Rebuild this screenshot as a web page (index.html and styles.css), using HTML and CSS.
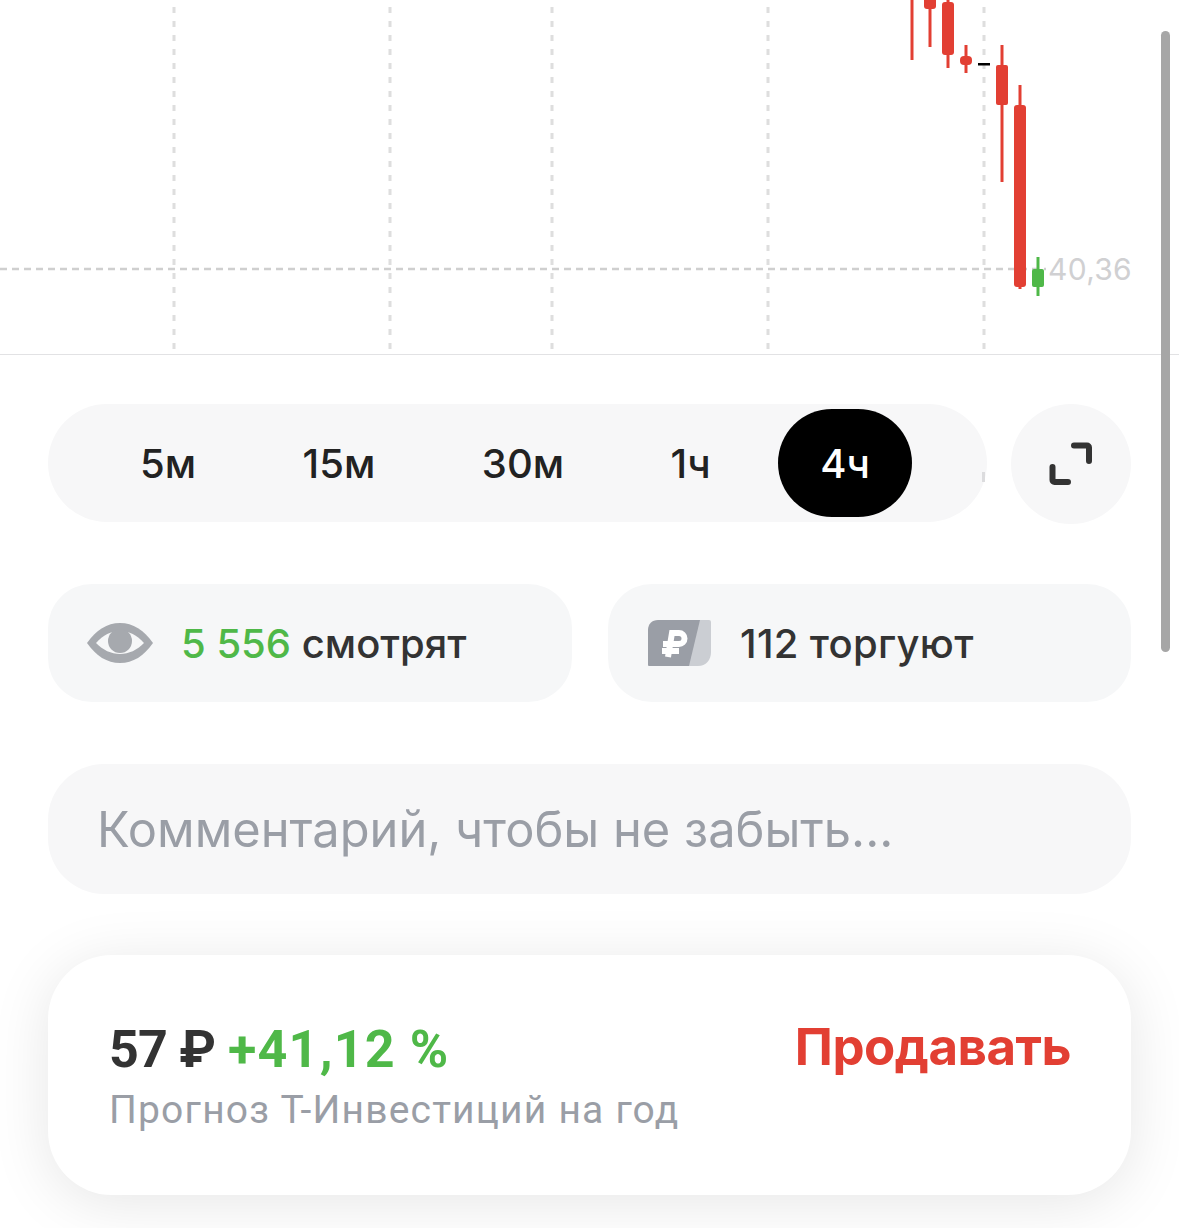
FILE: index.html
```html
<!DOCTYPE html>
<html lang="ru">
<head>
    <meta charset="UTF-8">
    <meta name="viewport" content="width=device-width, initial-scale=1.0">
    <title>Т-Инвестиции</title>
    <link rel="stylesheet" href="styles.css">
</head>
<body>
    <div class="chart">
        <svg class="chart-svg" width="1179" height="354" viewBox="0 0 1179 354">
            <g class="grid">
                <line x1="174" y1="-7" x2="174" y2="349"/>
                <line x1="390" y1="-7" x2="390" y2="349"/>
                <line x1="552" y1="-7" x2="552" y2="349"/>
                <line x1="768" y1="-7" x2="768" y2="349"/>
                <line x1="984" y1="-7" x2="984" y2="349"/>
            </g>
            <line class="price-line" x1="0" y1="269" x2="1046" y2="269"/>
            <g class="wick-red">
                <line x1="912" y1="0" x2="912" y2="60"/>
                <line x1="930" y1="0" x2="930" y2="47"/>
                <line x1="948" y1="0" x2="948" y2="68"/>
                <line x1="966" y1="45" x2="966" y2="73"/>
                <line x1="1002" y1="45" x2="1002" y2="182"/>
                <line x1="1020" y1="85" x2="1020" y2="289"/>
            </g>
            <g class="body-red">
                <rect x="924" y="-4" width="12" height="13" rx="3"/>
                <rect x="942" y="2" width="12" height="53" rx="3"/>
                <rect x="960" y="56" width="12" height="9" rx="4"/>
                <rect x="996" y="65" width="12" height="40" rx="2"/>
                <rect x="1014" y="105" width="12" height="182" rx="3"/>
            </g>
            <rect class="doji" x="978" y="63" width="12" height="2.500"/>
            <line class="wick-green" x1="1038" y1="257" x2="1038" y2="296"/>
            <rect class="body-green" x="1032" y="269" width="12" height="18" rx="2"/>
        </svg>
        <span class="last-price">40,36</span>
    </div>

    <main class="content">
        <div class="period-row">
            <div class="periods">
                <span class="period">5м</span>
                <span class="period">15м</span>
                <span class="period">30м</span>
                <span class="period">1ч</span>
                <span class="period active">4ч</span>
                <span class="period-peek"></span>
            </div>
            <button class="expand" type="button" aria-label="На весь экран">
                <svg width="44" height="44" viewBox="0 0 44 44">
                    <path d="M25 3.500h13a2 2 0 0 1 2 2V19"/>
                    <path d="M3.500 25v13a2 2 0 0 0 2 2H19"/>
                </svg>
            </button>
        </div>

        <div class="stats">
            <div class="stat">
                <svg class="eye" width="66" height="40" viewBox="0 0 66 40">
                    <path class="eye-outer" d="M0 20C9 7 20 0 33 0s24 7 33 20c-9 13-20 20-33 20S9 33 0 20z"/>
                    <path class="eye-inner" d="M9 20c7-8 15-12 24-12s17 4 24 12c-7 7-15 11-24 11S16 27 9 20z"/>
                    <circle class="eye-outer" cx="33" cy="18" r="12"/>
                </svg>
                <span><span class="green">5 556</span> смотрят</span>
            </div>
            <div class="stat stat-trade">
                <svg class="ruble" width="64" height="46" viewBox="0 0 64 46">
                    <path class="ruble-light" d="M50 0h11a2 2 0 0 1 2 2v30c0 8-5 14-13 14H39z"/>
                    <path class="ruble-dark" d="M10 0h42L41 46H1a1 1 0 0 1-1-1V10C0 4 4 0 10 0z"/>
                    <g class="ruble-sign">
                        <path d="M20 37L24 13h7a5.500 5.500 0 0 1 0 11H15"/>
                        <path d="M14 31h17"/>
                    </g>
                </svg>
                <span>112 торгуют</span>
            </div>
        </div>

        <div class="comment">Комментарий, чтобы не забыть...</div>

        <section class="forecast">
            <div class="forecast-info">
                <div class="forecast-price"><span class="forecast-value">57 ₽</span> <span class="green forecast-growth">+41,12 %</span></div>
                <div class="forecast-label">Прогноз Т-Инвестиций на год</div>
            </div>
            <div class="forecast-action">Продавать</div>
        </section>
    </main>

    <div class="scrollbar"></div>
</body>
</html>
```

FILE: styles.css
```css
* {
    box-sizing: border-box;
}

body {
    margin: 0;
    height: 1228px;
    overflow: hidden;
    position: relative;
    background: #fff;
    font-family: 'Inter', 'Liberation Sans', sans-serif;
    color: #333;
}

.chart {
    position: relative;
    height: 355px;
    border-bottom: 1px solid #e2e2e4;
}

.chart-svg {
    display: block;
}

.grid line {
    stroke: #dedede;
    stroke-width: 3;
    stroke-dasharray: 6 8;
}

.price-line {
    stroke: #cfcfcf;
    stroke-width: 2.500;
    stroke-dasharray: 7 5;
}

.wick-red line {
    stroke: #e23f33;
    stroke-width: 3;
}

.body-red rect {
    fill: #e23f33;
}

.doji {
    fill: #000;
}

.wick-green {
    stroke: #4fb848;
    stroke-width: 3;
}

.body-green {
    fill: #4fb848;
}

.last-price {
    position: absolute;
    right: 47px;
    top: 251px;
    font-size: 30px;
    line-height: 36px;
    letter-spacing: 0.300px;
    color: #d0d0d2;
}

.content {
    padding: 49px 48px 0;
}

.period-row {
    display: flex;
    gap: 24px;
}

.periods {
    position: relative;
    flex: 1;
    height: 118px;
    padding: 5px 0 5px 92px;
    display: flex;
    align-items: center;
    gap: 106.500px;
    border-radius: 59px;
    background: #f7f7f8;
}

.period {
    height: 108px;
    display: flex;
    align-items: center;
    font-size: 40px;
    font-weight: 500;
    color: #222;
}

.period.active {
    width: 134px;
    margin-left: -39px;
    justify-content: center;
    border-radius: 54px;
    background: #000;
    color: #fff;
}

.period-peek {
    position: absolute;
    right: 2px;
    top: 68px;
    width: 3px;
    height: 10px;
    background: #dcdcde;
}

.expand {
    width: 120px;
    height: 120px;
    padding: 0;
    flex: none;
    display: flex;
    align-items: center;
    justify-content: center;
    border: none;
    border-radius: 50%;
    background: #f7f7f8;
}

.expand path {
    fill: none;
    stroke: #333;
    stroke-width: 6;
    stroke-linecap: round;
}

.stats {
    margin-top: 60px;
    display: grid;
    grid-template-columns: 524px 523px;
    gap: 36px;
}

.stat {
    height: 118px;
    padding-left: 39px;
    display: flex;
    align-items: center;
    gap: 28px;
    border-radius: 44px;
    background: #f6f7f8;
    font-size: 40px;
    font-weight: 500;
    color: #333;
}

.stat-trade {
    padding-left: 40px;
    letter-spacing: 0.300px;
}

.green {
    color: #4fb848;
}

.eye-outer {
    fill: #a6a9ae;
}

.eye-inner {
    fill: #f6f7f8;
}

.ruble-dark {
    fill: #9a9ea6;
}

.ruble-light {
    fill: #cbced3;
}

.ruble-sign path {
    fill: none;
    stroke: #fff;
    stroke-width: 6;
}

.comment {
    margin-top: 62px;
    height: 130px;
    padding-left: 49px;
    display: flex;
    align-items: center;
    border-radius: 56px;
    background: #f7f7f8;
    font-size: 48.800px;
    color: #9a9ea6;
}

.forecast {
    margin-top: 61px;
    height: 240px;
    padding: 62px 60px 0 61px;
    display: flex;
    align-items: flex-start;
    justify-content: space-between;
    border-radius: 64px;
    background: #fff;
    box-shadow: 0 8px 60px rgba(0, 0, 0, 0.1);
}

.forecast-info {
    margin-top: 3px;
}

.forecast-price {
    font-family: 'Roboto', 'Liberation Sans', sans-serif;
    font-size: 52px;
    line-height: 60px;
    font-weight: 700;
    color: #333;
}

.forecast-value {
    letter-spacing: -0.800px;
}

.forecast-growth {
    letter-spacing: 1.200px;
}

.forecast-label {
    margin-top: 8px;
    font-family: 'Roboto', 'Liberation Sans', sans-serif;
    font-size: 39px;
    line-height: 44px;
    letter-spacing: 1.200px;
    color: #9a9ea6;
}

.forecast-action {
    font-size: 51px;
    line-height: 60px;
    font-weight: 700;
    letter-spacing: -0.500px;
    color: #e23f33;
}

.scrollbar {
    position: absolute;
    left: 1161px;
    top: 31px;
    width: 9px;
    height: 621px;
    border-radius: 5px;
    background: #a6a6a6;
}
```
